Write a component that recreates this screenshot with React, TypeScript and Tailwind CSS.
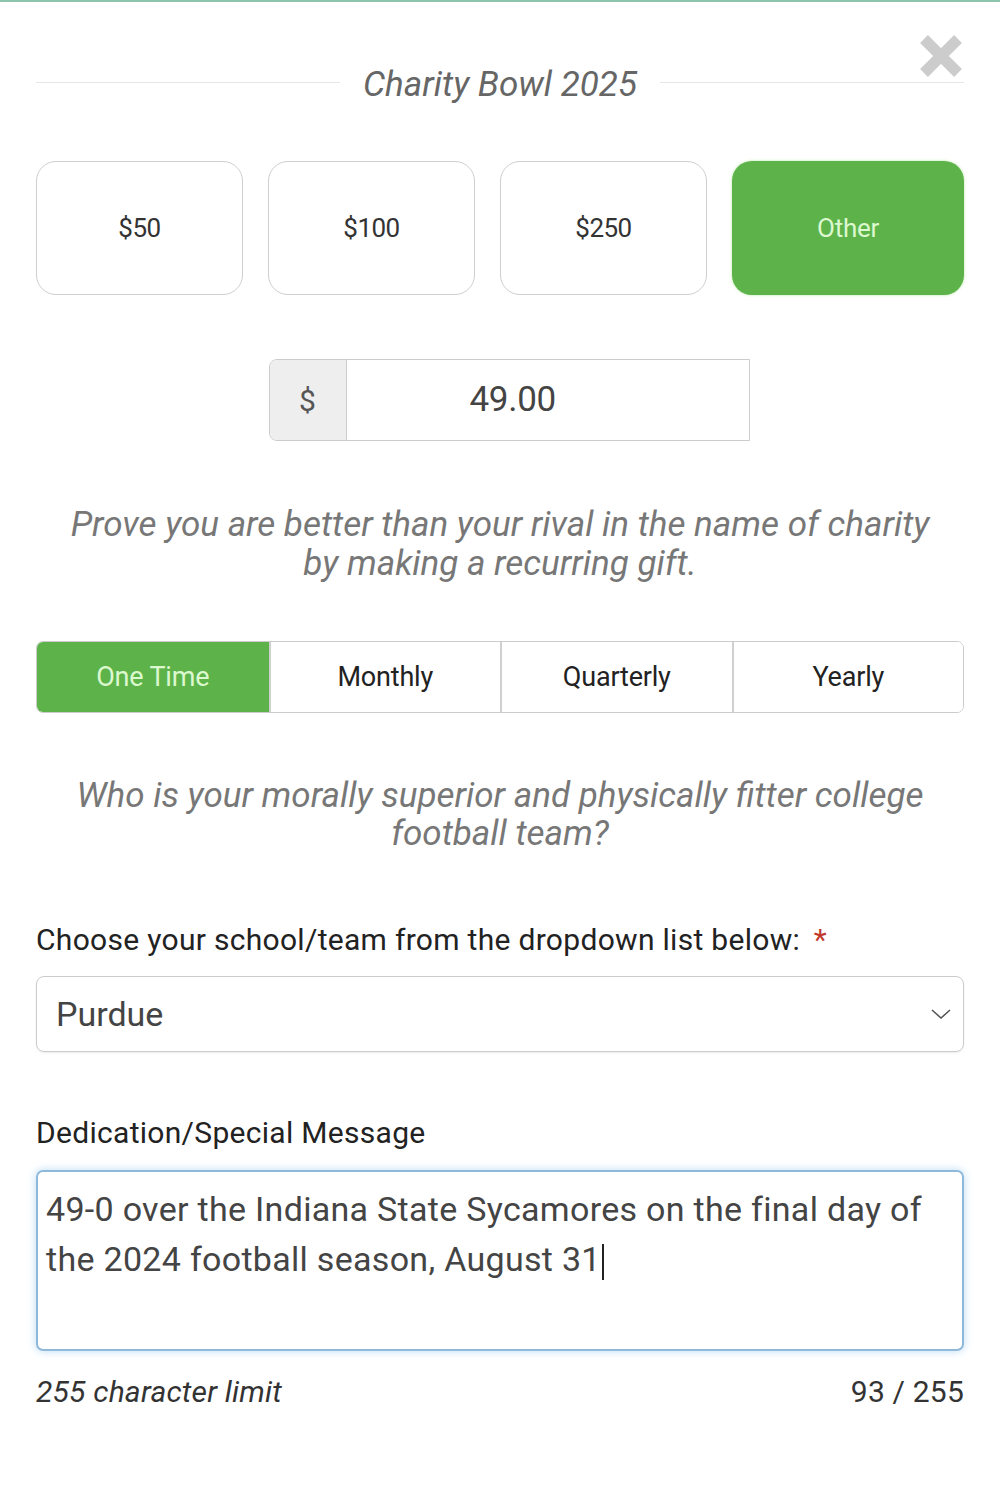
import React, { useState } from 'react';

const amounts = ['$50', '$100', '$250'];
const frequencies = ['One Time', 'Monthly', 'Quarterly', 'Yearly'];

const App: React.FC = () => {
  const [message] = useState(
    '49-0 over the Indiana State Sycamores on the final day of the 2024 football season, August 31'
  );

  return (
    <div className="min-h-[1498px] w-[1000px] bg-white font-['Roboto',sans-serif] text-[#333]">
      <div className="h-[2px] bg-[#8cc4ad]" />
      <div className="px-[36px] pt-[33px]">
        {/* heading */}
        <div className="relative flex items-center gap-[23px] h-[100px]">
          <div className="flex-1 h-px bg-[#e6e6e6] mt-[-5px]" />
          <h1 className="text-[35px] italic text-[#666] tracking-[0px]">Charity Bowl 2025</h1>
          <div className="flex-1 h-px bg-[#e6e6e6] mt-[-5px]" />
          <button className="absolute right-0 top-[-2px] w-[46px] h-[46px] flex items-center justify-center">
            <svg viewBox="0 0 46 46" className="w-[46px] h-[46px]">
              <path d="M6 6 L40 40 M40 6 L6 40" stroke="#cccccc" strokeWidth="11" />
            </svg>
          </button>
        </div>

        {/* preset amounts */}
        <div className="flex gap-[25px] mt-[26px]">
          {amounts.map((a) => (
            <button
              key={a}
              className="w-[207px] h-[134px] rounded-[20px] border border-[#cfcfcf] bg-white text-[26px] text-[#333] tracking-[-0.5px]"
            >
              {a}
            </button>
          ))}
          <button className="flex-1 h-[134px] rounded-[20px] bg-[#5db349] text-[26px] text-[#dcf8cf] tracking-[-0.3px] shadow-[0_0_3px_#b8e8a8]">
            Other
          </button>
        </div>

        {/* custom amount */}
        <div className="flex justify-center mt-[64px]">
          <div className="flex w-[481px] h-[82px] ml-[18px] border border-[#cccccc] rounded-l-[8px]">
            <div className="w-[77px] flex items-center justify-center bg-[#eeeeee] border-r border-[#cccccc] rounded-l-[8px] text-[30px] text-[#555]">
              $
            </div>
            <div className="flex-1 flex items-center pl-[123px] text-[35px] text-[#444] tracking-[-0.3px]">
              49.00
            </div>
          </div>
        </div>

        <p className="mt-[64px] text-center text-[35px] italic text-[#777] leading-[39px] tracking-[0px]">
          Prove you are better than your rival in the name of charity
          <br />
          by making a recurring gift.
        </p>

        {/* frequency */}
        <div className="mt-[58px] grid grid-cols-4 h-[72px] border border-[#cccccc] rounded-[7px] overflow-hidden">
          {frequencies.map((f, i) => (
            <button
              key={f}
              className={
                i === 0
                  ? 'bg-[#5db349] text-[#dcf8cf] text-[27px] tracking-[-0.2px]'
                  : 'bg-white text-[#222] text-[27px] tracking-[-0.2px] border-l-2 border-[#d0d0d0]'
              }
            >
              {f}
            </button>
          ))}
        </div>

        <p className="mt-[64px] text-center text-[35px] italic text-[#777] leading-[38px] tracking-[0px]">
          Who is your morally superior and physically fitter college
          <br />
          football team?
        </p>

        {/* school select */}
        <label className="block mt-[64px] text-[30px] text-[#222] tracking-[0.3px]">
          Choose your school/team from the dropdown list below:{' '}
          <span className="text-[#c0392b] ml-[6px]">*</span>
        </label>
        <div className="mt-[14px] h-[76px] flex items-center justify-between border border-[#cccccc] rounded-[8px] pl-[19px] pr-[10px] shadow-[0_1px_2px_rgba(0,0,0,0.08)]">
          <span className="text-[34px] text-[#444] tracking-[0px]">Purdue</span>
          <svg viewBox="0 0 24 24" className="w-[24px] h-[24px]">
            <path d="M3 8 L12 16 L21 8" fill="none" stroke="#555" strokeWidth="1.6" />
          </svg>
        </div>

        {/* dedication */}
        <label className="block mt-[58px] text-[30px] text-[#222] tracking-[0.3px]">
          Dedication/Special Message
        </label>
        <div className="mt-[15px] h-[181px] border-2 border-[#8fb9da] rounded-[7px] shadow-[0_0_8px_rgba(102,175,233,0.45)] px-[8px] pt-[12px] text-[34px] leading-[50px] text-[#444] tracking-[0.3px]">
          {message}
          <span className="inline-block w-[2px] h-[36px] bg-[#222] align-middle ml-[1px]" />
        </div>

        <div className="mt-[18px] flex justify-between text-[30px] text-[#333] tracking-[0.2px]">
          <span className="italic">255 character limit</span>
          <span>93 / 255</span>
        </div>
      </div>
    </div>
  );
};

export default App;
